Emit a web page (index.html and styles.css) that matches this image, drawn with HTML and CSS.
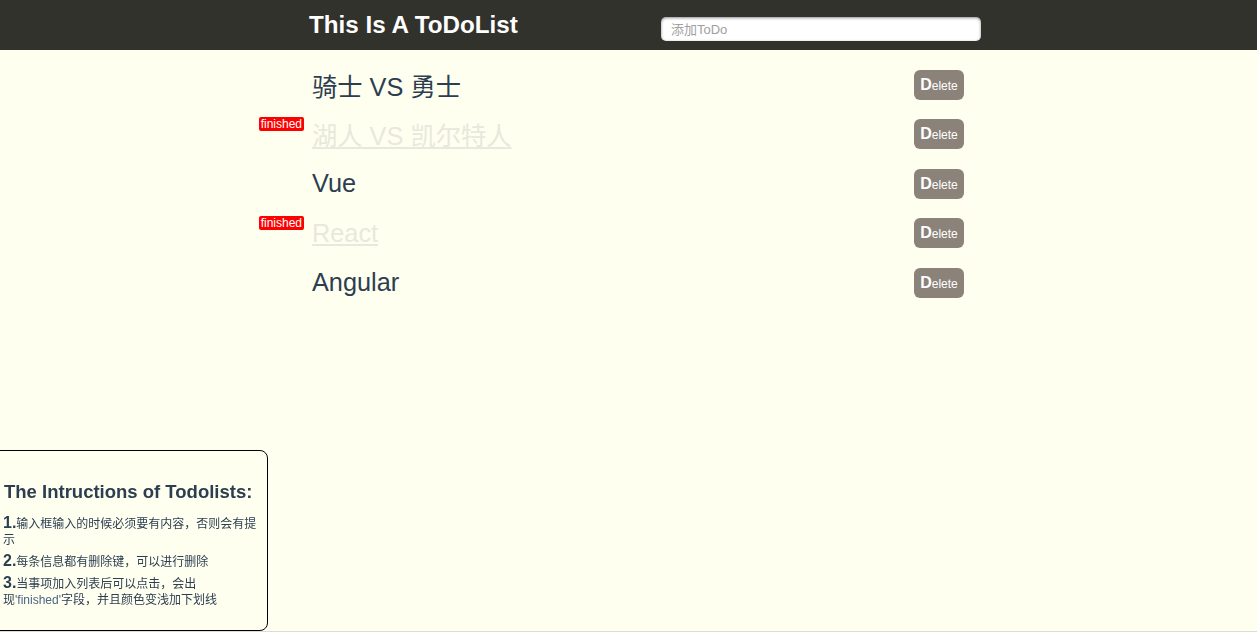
FILE: index.html
```html
<!DOCTYPE html>
<html lang="zh">
<head>
<meta charset="utf-8">
<title>ToDoList</title>
<link rel="stylesheet" href="styles.css">
</head>
<body>
<header class="header">
  <div class="header-inner">
    <h1 class="title">This Is A ToDoList</h1>
    <input class="todo-input" type="text" placeholder="添加ToDo">
  </div>
</header>
<main class="main">
  <ul class="todo-list">
    <li class="todo-item"><span class="todo-text">骑士 VS 勇士</span><button class="del"><b>D</b>elete</button></li>
    <li class="todo-item done"><span class="badge">finished</span><span class="todo-text">湖人 VS 凯尔特人</span><button class="del"><b>D</b>elete</button></li>
    <li class="todo-item"><span class="todo-text">Vue</span><button class="del"><b>D</b>elete</button></li>
    <li class="todo-item done"><span class="badge">finished</span><span class="todo-text">React</span><button class="del"><b>D</b>elete</button></li>
    <li class="todo-item"><span class="todo-text">Angular</span><button class="del"><b>D</b>elete</button></li>
  </ul>
</main>
<aside class="intro">
  <h2 class="intro-title">The Intructions of Todolists:</h2>
  <p class="intro-item"><b>1.</b>输入框输入的时候必须要有内容，否则会有提示</p>
  <p class="intro-item"><b>2.</b>每条信息都有删除键，可以进行删除</p>
  <p class="intro-item"><b>3.</b>当事项加入列表后可以点击，会出现<span class="hl">'finished'</span>字段，并且颜色变浅加下划线</p>
</aside>
</body>
</html>
```
FILE: styles.css
```css
html {
  background: #dcdcd8;
}
body {
  margin: 0;
  height: 631px;
  background: #fffff0;
  font-family: "Liberation Sans", Arial, "Noto Sans CJK SC", sans-serif;
  color: #2c3e50;
}
.header {
  height: 50px;
  background: #32322d;
}
.header-inner {
  margin-left: 309px;
  width: 672px;
  height: 50px;
  display: flex;
  align-items: center;
  justify-content: space-between;
}
.title {
  margin: 0;
  font-size: 24.2px;
  font-weight: bold;
  color: #fff;
  line-height: 28px;
}
.todo-input {
  box-sizing: border-box;
  width: 320px;
  height: 24px;
  margin-top: 8px;
  border: none;
  border-radius: 5px;
  background: #fff;
  box-shadow: inset 0 1px 3px rgba(0,0,0,0.45);
  padding: 0 10px;
  font-family: "Liberation Sans", Arial, "Noto Sans CJK SC", sans-serif;
  font-size: 13px;
  outline: none;
}
.todo-input::placeholder {
  color: #a0a0a0;
}
.main {
  margin-left: 309px;
  width: 655px;
}
.todo-list {
  list-style: none;
  margin: 10px 0 0;
  padding: 0;
}
.todo-item {
  position: relative;
  height: 49.5px;
  display: flex;
  align-items: center;
  justify-content: space-between;
}
.todo-text {
  font-size: 25.3px;
  padding-left: 3px;
  font-family: "Liberation Sans", Arial, "Noto Sans CJK SC", sans-serif;
}
.done .todo-text {
  color: #e8e8dc;
  text-decoration: underline;
}
.badge {
  position: absolute;
  right: calc(100% + 5px);
  top: 7px;
  background: #ff0000;
  color: #fff;
  font-size: 12px;
  line-height: 14px;
  padding: 0 2px;
  border-radius: 2px;
}
.del {
  width: 50px;
  height: 30px;
  border: none;
  border-radius: 6px;
  background: #8b8379;
  color: #fff;
  font-family: "Liberation Sans", Arial, sans-serif;
  font-size: 12px;
  padding: 0;
  cursor: pointer;
}
.del b {
  font-size: 16px;
}
.intro {
  position: fixed;
  left: -12px;
  bottom: 1px;
  width: 280px;
  height: 181px;
  box-sizing: border-box;
  border: 1px solid #000;
  border-radius: 8px;
  padding: 30px 8px 0 14px;
}
.intro-title {
  margin: 0 0 12px 1px;
  font-size: 18.5px;
  font-weight: bold;
  line-height: 22px;
}
.intro-item {
  margin: 0 0 5px;
  font-size: 12px;
  line-height: 16px;
  font-family: "Liberation Sans", Arial, "Noto Sans CJK SC", sans-serif;
}
.intro-item b {
  font-size: 16px;
}
.hl {
  color: #4b6584;
}
```
